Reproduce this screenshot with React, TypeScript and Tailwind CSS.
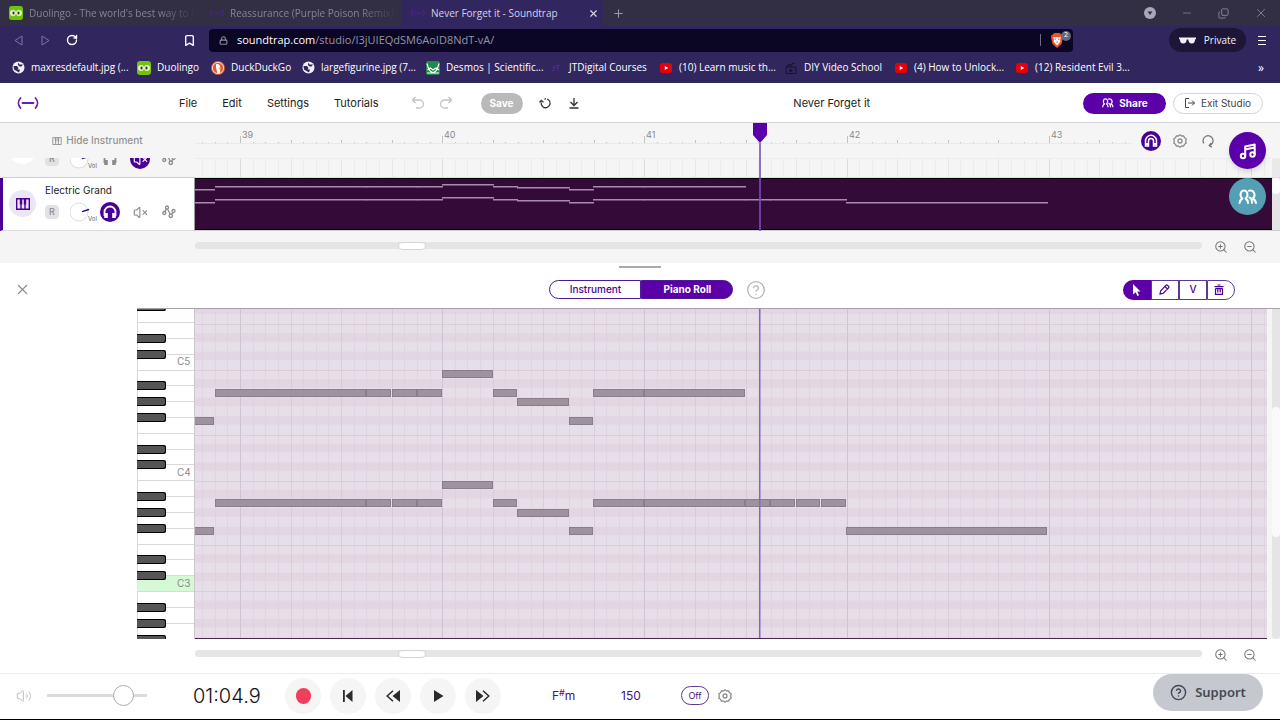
import { useState } from "react";
import type { ReactNode } from "react";
import {
  Bookmark,
  CircleHelp,
  Copy,
  Lock,
  Minus,
  Plus,
  RotateCw,
  Volume2,
  VolumeX,
  X,
  ZoomIn,
  ZoomOut,
} from "lucide-react";

function classNames(...classes: string[]) {
  return classes.filter(Boolean).join(" ");
}

// x values are pixels from the left edge of the timeline
const BAR = 202.2;
const FIRST_BAR = 45;
const PLAYHEAD = 565;
const ROW = 9.22;
const OCTAVE_TOP = 61;

// row 0 is the top B, every row is one semitone down
const NOTES = [
  { from: -4, to: 19, row: 5 },
  { from: 20, to: 171, row: 2 },
  { from: 171, to: 196, row: 2 },
  { from: 197, to: 222, row: 2 },
  { from: 222, to: 247, row: 2 },
  { from: 247, to: 298, row: 0 },
  { from: 298, to: 322, row: 2 },
  { from: 322, to: 374, row: 3 },
  { from: 374, to: 398, row: 5 },
  { from: 398, to: 449, row: 2 },
  { from: 449, to: 550, row: 2 },
  { from: -4, to: 19, row: 17 },
  { from: 20, to: 171, row: 14 },
  { from: 171, to: 196, row: 14 },
  { from: 197, to: 222, row: 14 },
  { from: 222, to: 247, row: 14 },
  { from: 247, to: 298, row: 12 },
  { from: 298, to: 322, row: 14 },
  { from: 322, to: 374, row: 15 },
  { from: 374, to: 398, row: 17 },
  { from: 398, to: 449, row: 14 },
  { from: 449, to: 550, row: 14 },
  { from: 550, to: 575, row: 14 },
  { from: 575, to: 600, row: 14 },
  { from: 601, to: 625, row: 14 },
  { from: 626, to: 651, row: 14 },
  { from: 651, to: 852, row: 17 },
];

const BOOKMARKS = [
  { label: "maxresdefault.jpg (...", icon: "globe", width: "w-[125px]" },
  { label: "Duolingo", icon: "duo", width: "w-[74px]" },
  { label: "DuckDuckGo", icon: "duck", width: "w-[91px]" },
  { label: "largefigurine.jpg (7...", icon: "globe", width: "w-[124px]" },
  { label: "Desmos | Scientific...", icon: "desmos", width: "w-[123px]" },
  { label: "JTDigital Courses", icon: "jt", width: "w-[110px]" },
  { label: "(10) Learn music th...", icon: "youtube", width: "w-[125px]" },
  { label: "DIY Video School", icon: "clapper", width: "w-[110px]" },
  { label: "(4) How to Unlock...", icon: "youtube", width: "w-[121px]" },
  { label: "(12) Resident Evil 3...", icon: "youtube", width: "w-[125px]" },
];

function Favicon({ icon }: { icon: string }) {
  if (icon === "duo")
    return (
      <svg width="14" height="14" viewBox="0 0 14 14" className="shrink-0">
        <rect width="14" height="14" rx="3" fill="#6fc40c" />
        <rect x="1" y="4" width="6" height="6" rx="3" fill="#e8f5c8" />
        <rect x="7" y="4" width="6" height="6" rx="3" fill="#e8f5c8" />
        <rect x="3.5" y="5.5" width="2" height="3" rx="1" fill="#333" />
        <rect x="8.5" y="5.5" width="2" height="3" rx="1" fill="#333" />
        <path d="M6 8.5h2L7 10.5z" fill="#f5a623" />
      </svg>
    );
  if (icon === "duck")
    return (
      <svg width="14" height="14" viewBox="0 0 14 14" className="shrink-0">
        <circle cx="7" cy="7" r="7" fill="#de5833" />
        <circle cx="7" cy="7" r="5.6" fill="none" stroke="#fff" strokeWidth=".8" />
        <path d="M5 3.2c2.500-.8 4.500.5 4.300 3.300l-.3 5.300-2.500.6L5 6.500z" fill="#fff" />
        <path d="M7.800 6.800l2.700.5-2.700 1z" fill="#f5a623" />
      </svg>
    );
  if (icon === "desmos")
    return (
      <svg width="14" height="14" viewBox="0 0 14 14" className="shrink-0">
        <rect width="14" height="14" rx="2" fill="#1e8a4c" />
        <path d="M1 2.500c2 8 4.500 9 6 9s4-1 6-9M1.500 9l3-2 2.500 2 3-2 3 2M1 12h12" fill="none" stroke="#fff" strokeWidth="1.200" />
      </svg>
    );
  if (icon === "jt")
    return (
      <svg width="14" height="14" viewBox="0 0 14 14" fill="none" stroke="#53279a" className="shrink-0">
        <path d="M5 4v5.500H3M6.500 4.500h5M9 4.500V10M3.500 6.500h6" />
      </svg>
    );
  if (icon === "youtube")
    return (
      <svg width="14" height="14" viewBox="0 0 14 14" className="shrink-0">
        <rect x="1" y="2" width="12" height="10" rx="2.500" fill="#e6000c" />
        <path d="M5.800 5v4l3.400-2z" fill="#fff" />
      </svg>
    );
  if (icon === "clapper")
    return (
      <svg width="14" height="14" viewBox="0 0 14 14" fill="none" stroke="#17122e" className="shrink-0">
        <path d="M2 6h10v6.500H2zM2 5l9-3M4 6l1-2M7 6l1-2" />
        <path d="M6 8v3l2.500-1.500z" fill="#17122e" />
      </svg>
    );
  return (
    <svg width="13" height="13" viewBox="0 0 13 13" className="shrink-0">
      <circle cx="6.500" cy="6.500" r="6" fill="#f2f0f8" />
      <path d="M1.500 5l3.500 0 1.500 2-1 1.500H8L7 11.500 4.500 10 2 8.500zM6 1.500l1.500 2h3.500l-1.500 2h-2L6 4z" fill="#32265e" />
    </svg>
  );
}

function SoundtrapMark({ className }: { className: string }) {
  return (
    <svg viewBox="0 0 22 14" fill="none" stroke="currentColor" strokeWidth="1.800" strokeLinecap="round" className={className}>
      <path d="M3.500 2C.8 5 .8 9 3.500 12M18.500 2c2.700 3 2.700 7 0 10M5.500 7h11" />
    </svg>
  );
}

function PeopleIcon({ className }: { className: string }) {
  return (
    <svg viewBox="0 0 20 16" fill="none" stroke="currentColor" strokeWidth="2" strokeLinecap="round" strokeLinejoin="round" className={className}>
      <path d="M4.500 9.500C1 7 2.500 1.500 6 1.500S11 7 7.500 9.500M4.500 9.500c-2 .5-2.500 2-3 4.500M7.500 9.500c1.500.8 2.300 2 2.500 4.500" />
      <path d="M11 1.800c5-1.300 7.500 5 3.500 7.700 2 .8 3 2 3.500 4.500M11.500 8.500c2 .8 2.500 2.500 2.500 5.500" />
    </svg>
  );
}

function HeadphonesIcon({ className }: { className: string }) {
  return (
    <svg viewBox="0 0 14 14" fill="none" stroke="currentColor" className={className}>
      <path d="M1.500 11V7a5.500 5.500 0 0 1 11 0v4" strokeWidth="1.800" />
      <path d="M3 8v5M11 8v5" strokeWidth="3.600" />
    </svg>
  );
}

function MagnetIcon() {
  return (
    <svg width="14" height="14" viewBox="0 0 14 14" fill="none" stroke="#fff">
      <path d="M1.500 12V6.800a5.500 5.500 0 0 1 11 0V12h-3V7a2.500 2.500 0 0 0-5 0v5z" strokeWidth="1.500" />
      <path d="M1.500 10h3M9.500 10h3" strokeWidth="2" />
    </svg>
  );
}

function AutomationIcon() {
  return (
    <svg width="14" height="14" viewBox="0 0 14 14" fill="none" stroke="#8c8c8c" strokeWidth="1.300">
      <circle cx="2.300" cy="8" r="1.500" />
      <circle cx="5" cy="2.500" r="1.500" />
      <circle cx="8.800" cy="10.800" r="1.700" />
      <circle cx="11.500" cy="6" r="1.500" />
      <path d="M2.900 6.600l1.400-2.700M5.500 4l2.800 5.300M9.600 9.300l1.200-2" />
    </svg>
  );
}

function GearIcon() {
  return (
    <svg width="14" height="14" viewBox="0 0 14 14" fill="none" stroke="#8c8c8c" strokeWidth="1.300" strokeLinejoin="round">
      <path d="M5.300 2L7 .8 8.700 2l2-.1.8 1.900 1.700 1L12.700 7l.5 2.200-1.700 1-.8 1.900-2-.1L7 13.200 5.300 12l-2 .1-.8-1.900-1.700-1L1.300 7 .8 4.800l1.700-1 .8-1.900z" />
      <circle cx="7" cy="7" r="2" />
    </svg>
  );
}

function PianoIcon({ className }: { className: string }) {
  return (
    <svg viewBox="0 0 14 12" fill="none" stroke="currentColor" className={className}>
      <path d="M.700.700h12.600v10.600H.700zM5 6v5M9 6v5" strokeWidth="1.400" />
      <path d="M5 1v5.500M9 1v5.500" strokeWidth="2.400" />
    </svg>
  );
}

function Tab({ title, children, active }: { title: string; children: ReactNode; active?: boolean }) {
  return (
    <div
      className={classNames(
        "flex h-full w-[201px] shrink-0 items-center pl-[9px] text-[10px]",
        active ? "bg-[#32265e] font-medium text-[#d6d1e6]" : "text-[#85829a]"
      )}
    >
      {children}
      <span
        className={classNames(
          "ml-1.5 min-w-0 flex-1 whitespace-nowrap",
          active ? "" : "[mask-image:linear-gradient(to_right,black_75%,transparent_97%)]"
        )}
      >
        {title}
      </span>
      {active && (
        <button aria-label="Close tab" className="mr-1 text-[#d8d4e6]">
          <X size={11} strokeWidth={2.5} />
        </button>
      )}
    </div>
  );
}

function BrowserChrome() {
  return (
    <div className="bg-[#32265e] font-['Open_Sans','Noto_Sans',sans-serif]">
      <div className="flex h-[26px] items-center bg-[#322f45]">
        <Tab title="Duolingo - The world's best way to le">
          <Favicon icon="duo" />
        </Tab>
        <Tab title="Reassurance (Purple Poison Remix) (p">
          <SoundtrapMark className="h-3 w-3.5 shrink-0 text-[#4a2390]" />
        </Tab>
        <Tab title="Never Forget it - Soundtrap" active>
          <SoundtrapMark className="h-3 w-3.5 shrink-0 text-[#4d1f9c]" />
        </Tab>
        <button aria-label="New tab" className="ml-[9px] text-[#9a97aa]">
          <Plus size={13} />
        </button>
        <div className="ml-auto flex items-center gap-[25px] pr-3 text-[#8a879b]">
          <button aria-label="Search tabs">
            <svg width="12" height="12" viewBox="0 0 12 12">
              <circle cx="6" cy="6" r="6" fill="#a9a7b5" />
              <path d="M3.500 4.500h5L6 8z" fill="#322f45" />
            </svg>
          </button>
          <button aria-label="Minimize"><Minus size={12} strokeWidth={1.5} /></button>
          <button aria-label="Restore"><Copy size={11} className="-scale-x-100 rotate-180" /></button>
          <button aria-label="Close window"><X size={14} strokeWidth={1.5} /></button>
        </div>
      </div>

      <div className="flex h-7 items-center pr-3">
        <button aria-label="Back" className="ml-3.5">
          <svg width="9" height="11" viewBox="0 0 9 11" fill="none" stroke="#7c74a0"><path d="M8 1L1 5.500 8 10z" /></svg>
        </button>
        <button aria-label="Forward" className="ml-[18px]">
          <svg width="9" height="11" viewBox="0 0 9 11" fill="none" stroke="#7c74a0"><path d="M1 1l7 4.500L1 10z" /></svg>
        </button>
        <button aria-label="Reload" className="ml-4 text-white"><RotateCw size={12} strokeWidth={2.8} /></button>
        <button aria-label="Bookmark" className="ml-[105px] text-white"><Bookmark size={13} strokeWidth={2.5} /></button>
        <label className="ml-[13px] flex h-[23px] flex-1 items-center rounded bg-[#0b0624] px-2.5">
          <Lock size={9} strokeWidth={3} className="text-[#8b8899]" />
          <input
            aria-label="Address"
            className="sr-only"
            defaultValue="soundtrap.com/studio/I3jUIEQdSM6AoID8NdT-vA/"
          />
          <span className="ml-[9px] text-[11px] text-[#9694a4]">
            <span className="font-medium text-white">soundtrap.com</span>/studio/I3jUIEQdSM6AoID8NdT-vA/
          </span>
          <span className="ml-auto h-3 w-px bg-[#6b6880]" />
          <button aria-label="Brave Shields" className="relative ml-2.5">
            <svg width="12" height="15" viewBox="0 0 12 15">
              <path d="M3 0h6l1 1.500 1.500.5L12 4l-1.500 7L6 15l-4.500-4L0 4l.5-2L2 1.500z" fill="#e8552b" />
              <path d="M2 4l2.500.5L6 4l1.500.5L10 4 9 7l.5 1.500L6 12.500 2.500 8.500 3 7z" fill="#fff" />
              <path d="M3.500 6.200h1.500M7 6.200h1.500M5.200 9h1.600" stroke="#e8552b" />
            </svg>
            <span className="absolute -right-2 -top-0.5 flex h-[10px] w-[10px] items-center justify-center rounded-full bg-[#6a6878] text-[7px] text-white">2</span>
          </button>
        </label>
        <button className="ml-24 flex h-6 w-[77px] items-center justify-center gap-2 rounded-full bg-[#1e1636] text-[10px] font-medium text-[#f2f0f8]">
          <svg width="17" height="7" viewBox="0 0 17 7" fill="#f2f0f8">
            <path d="M0 .5h17v1.500l-1 .5c0 2.500-1 4-3.200 4S9.500 5 9.300 2.500H7.700C7.500 5 6.500 6.500 4.200 6.500S1 5 1 2.500L0 2z" />
          </svg>
          Private
        </button>
        <button aria-label="Menu" className="ml-3 mr-0.5 flex w-2 flex-col gap-[3px]">
          <span className="h-px w-2 bg-white" />
          <span className="h-px w-2 bg-white" />
          <span className="h-px w-2 bg-white" />
        </button>
      </div>

      <nav className="flex h-[29px] items-center pb-0.5 pl-3 pr-4 text-[10px] text-white">
        {BOOKMARKS.map((b) => (
          <a key={b.label} href="#" className={classNames("flex shrink-0 items-center gap-1.5 whitespace-nowrap", b.width)}>
            <Favicon icon={b.icon} />
            {b.label}
          </a>
        ))}
        <button aria-label="More bookmarks" className="ml-auto text-xs">»</button>
      </nav>
    </div>
  );
}

function StudioHeader() {
  return (
    <header className="flex h-10 items-center border-b border-[#d3d3d8] bg-white pr-[17px] pt-px text-[11px] text-[#222]">
      <a href="#" aria-label="Soundtrap" className="ml-[17px] text-[#6a1fa8]">
        <SoundtrapMark className="h-3.5 w-[22px]" />
      </a>
      <nav className="ml-[140px] flex gap-[25px] whitespace-nowrap">
        <button>File</button>
        <button>Edit</button>
        <button>Settings</button>
        <button>Tutorials</button>
      </nav>
      <div className="ml-8 flex items-center gap-3.5 text-[#c4c4c4]">
        <button aria-label="Undo">
          <svg width="14" height="14" viewBox="0 0 14 14" fill="none" stroke="currentColor" strokeWidth="1.300"><path d="M4.500 1L1.500 4l3 3M2 4h6.500a4 4 0 0 1 0 8H5" /></svg>
        </button>
        <button aria-label="Redo">
          <svg width="14" height="14" viewBox="0 0 14 14" fill="none" stroke="currentColor" strokeWidth="1.300"><path d="M9.500 1l3 3-3 3M12 4H5.500a4 4 0 0 0 0 8H9" /></svg>
        </button>
      </div>
      <button className="ml-7 h-[21px] w-[42px] rounded-full bg-[#b9b9b9] text-[10px] font-bold text-white">Save</button>
      <button aria-label="Revisions" className="ml-4">
        <svg width="13" height="13" viewBox="0 0 13 13" fill="none" stroke="#333" strokeWidth="1.300">
          <path d="M9.500 2.700A4.500 4.500 0 1 1 2.200 5.500" />
          <path d="M9.500 2.700A4.500 4.500 0 0 0 4.500 2.500" strokeDasharray="1.500 1.200" />
          <path d="M.5 5.500L2.300 3.500l2.200 1.700" />
        </svg>
      </button>
      <button aria-label="Download" className="ml-4">
        <svg width="12" height="12" viewBox="0 0 12 12" fill="none" stroke="#333" strokeWidth="1.300"><path d="M6 1v7.500M2.500 5L6 8.500 9.500 5M1.500 11h9" /></svg>
      </button>
      <h1 className="flex-1 pl-[1px] text-center">Never Forget it</h1>
      <button className="flex h-[21px] w-[83px] items-center justify-center gap-1 rounded-full bg-[#5b00a8] text-[10px] font-bold text-white">
        <PeopleIcon className="h-2.5 w-3.5" />
        Share
      </button>
      <button className="ml-[7px] flex h-[21px] w-[90px] items-center justify-center gap-1.5 whitespace-nowrap rounded-full border border-[#d4d4d8] text-[10px] text-[#444]">
        <svg width="10" height="10" viewBox="0 0 10 10" fill="none" stroke="currentColor"><path d="M4 .5H.5v9H4M3 5h6.500M7 2.500L9.500 5 7 7.500" /></svg>
        Exit Studio
      </button>
    </header>
  );
}

function TrackControls({ name, solo, muted }: { name?: string; solo?: boolean; muted?: boolean }) {
  return (
    <div className="flex h-[52px] shrink-0 items-start pl-[6px] pt-1.5">
      <div className={classNames("mt-1.5 flex h-[27px] w-[27px] items-center justify-center rounded-full text-[#4b0095]", muted ? "bg-white" : "bg-[#ece6f4]")}>
        <PianoIcon className="h-3 w-3.5" />
      </div>
      <div className="ml-[9px]">
        <div className="h-[18px] text-[10px] leading-3 text-[#222]">{name}</div>
        <div className="flex h-5 items-center">
          <button aria-label="Record arm" className="h-3.5 w-3.5 rounded-sm bg-[#e2e2e2] text-[9px] font-medium leading-[14px] text-[#8c8c8c]">R</button>
          <svg width="29" height="20" viewBox="0 0 29 20" className="ml-[11px]">
            <circle cx="9" cy="10" r="9" fill="#fff" stroke="#cfcfcf" strokeWidth=".7" />
            <path d="M12 9.700l7-2.200" stroke="#2b0a86" strokeWidth="1.400" />
            <text x="18" y="19" fontSize="6" fill="#666">Vol</text>
          </svg>
          <button
            aria-label="Solo"
            className={classNames("ml-px flex h-5 w-5 items-center justify-center rounded-full", solo ? "bg-[#4b0095] text-white" : "text-[#8c8c8c]")}
          >
            <HeadphonesIcon className="h-3.5 w-3.5" />
          </button>
          <button
            aria-label="Mute"
            className={classNames("ml-[10px] flex h-5 w-5 items-center justify-center rounded-full", muted ? "bg-[#4b0095] text-white" : "text-[#8c8c8c]")}
          >
            <VolumeX size={15} strokeWidth={1.8} />
          </button>
          <button aria-label="Automation" className="ml-3"><AutomationIcon /></button>
        </div>
      </div>
    </div>
  );
}

function Ruler() {
  const ticks = Array.from({ length: 77 }, (_, i) => i - 3);
  return (
    <svg className="h-full w-full text-[#8a8a8a]" fontSize="9">
      {ticks.map((t) => {
        const x = Math.round(FIRST_BAR + (t * BAR) / 16);
        const top = t % 16 === 0 ? 13 : t % 4 === 0 ? 17 : 19;
        return <rect key={t} x={x} y={top} width="1" height={20 - top} fill="#c2c2c2" />;
      })}
      <rect y="20" width="100%" height="1" fill="#eaeaea" />
      {[39, 40, 41, 42, 43].map((n, i) => (
        <text key={n} x={Math.round(FIRST_BAR + i * BAR) + 2} y="15" fill="currentColor">{n}</text>
      ))}
    </svg>
  );
}

function GridLines({ bar, sub }: { bar: string; sub: string }) {
  const lines = Array.from({ length: 176 }, (_, i) => i - 3);
  return (
    <>
      {lines.map((l) => (
        <rect
          key={l}
          x={Math.round(FIRST_BAR + (l * BAR) / 16)}
          width="1"
          height="100%"
          fill={l % 4 === 0 ? bar : sub}
          opacity={l % 16 === 0 ? 1 : 0.6}
        />
      ))}
    </>
  );
}

function ScrollRow() {
  return (
    <>
      <div role="scrollbar" aria-label="Horizontal scroll" aria-controls="root" aria-valuenow={20} className="h-[7px] flex-1 rounded-full bg-[#e5e5e5]">
        <div className="ml-[203px] h-2 w-7 rounded-full border border-[#d4d4d4] bg-white" />
      </div>
      <div className="flex w-[78px] items-center gap-[15px] pl-3 pt-[3px] text-[#777]">
        <button aria-label="Zoom in"><ZoomIn size={14} strokeWidth={1.8} /></button>
        <button aria-label="Zoom out"><ZoomOut size={14} strokeWidth={1.8} /></button>
      </div>
    </>
  );
}

function Timeline() {
  return (
    <section className="relative grid grid-cols-[195px_1fr] bg-[#f5f5f5]">
      <button className="flex h-[35px] items-center justify-center gap-1 text-[10px] font-medium text-[#929292]">
        <PianoIcon className="h-2 w-2.5" />
        Hide Instrument
      </button>
      <div className="flex h-[35px]">
        <div className="min-w-0 flex-1"><Ruler /></div>
        <div className="flex w-[148px] items-center gap-3 pl-[9px]">
          <button aria-label="Snap to grid" className="flex h-5 w-5 items-center justify-center rounded-full bg-[#4b0095]"><MagnetIcon /></button>
          <button aria-label="Timeline settings"><GearIcon /></button>
          <button aria-label="Loop" className="pl-0.5">
            <svg width="14" height="14" viewBox="0 0 14 14" fill="none" stroke="#777" strokeWidth="1.300"><path d="M2.800 9.300a5 5 0 1 1 5.700 2.200M10 9l-1.800 2.600 2.600 1.500" /></svg>
          </button>
        </div>
      </div>

      <div className="flex h-5 flex-col justify-end overflow-hidden border-b border-l-[3px] border-b-[#cfcfcf] border-l-transparent">
        <TrackControls muted />
      </div>
      <div className="flex h-5 border-b border-t border-b-[#e4d9e6] border-t-[#ededed]">
        <svg className="h-full flex-1"><GridLines bar="#dcdcdc" sub="#e6e6e6" /></svg>
        <div className="w-2 bg-[#e9e9e9]" />
      </div>

      <div className="h-[53px] border-b border-l-[3px] border-r border-b-[#dcdcdc] border-l-[#4b0095] border-r-[#999] bg-white">
        <TrackControls name="Electric Grand" solo />
      </div>
      <div className="flex h-[53px] border-b border-[#cfcfcf]">
        <div className="flex-1 border-y border-black bg-[#340a38]">
          <svg className="h-full w-full">
            {NOTES.map((n) => (
              <rect
                key={`${n.from}-${n.row}`}
                x={n.from}
                y={Math.round(5 + n.row * 1.06)}
                width={n.to - n.from + 1}
                height="1.500"
                fill="#a98bad"
              />
            ))}
          </svg>
        </div>
        <div className="w-2 bg-[#e5e5e5]"><div className="h-4 rounded-full bg-white" /></div>
      </div>

      <div className="h-8" />
      <div className="flex h-8 items-center pb-1">
        <ScrollRow />
      </div>

      {/* playhead */}
      <svg width="14" height="108" className="pointer-events-none absolute left-[753px] top-0">
        <path d="M0 0h14v12l-7 8-7-8z" fill="#5b00a8" />
        <rect x="6" y="20" width="2" height="88" fill="#7a4cc0" opacity=".8" />
      </svg>

      <div className="absolute right-3.5 top-[9px] flex flex-col gap-[9px]">
        <button aria-label="Loops" className="flex h-[37px] w-[37px] items-center justify-center rounded-full bg-[#5b00a8] shadow-md">
          <svg width="18" height="18" viewBox="0 0 18 18" fill="none" stroke="#fff" strokeWidth="2" strokeLinejoin="round">
            <circle cx="4" cy="14" r="2.200" />
            <circle cx="13.500" cy="12.500" r="2.200" />
            <path d="M6.200 14V4.500l9.500-2v10M6.200 7.500l9.500-2" />
          </svg>
        </button>
        <button aria-label="Collaborate" className="flex h-[37px] w-[37px] items-center justify-center rounded-full bg-[#559fb4] text-white">
          <PeopleIcon className="h-4 w-5" />
        </button>
      </div>
    </section>
  );
}

function PanelHeader({ view, setView }: { view: string; setView: (v: string) => void }) {
  const tool = "flex h-5 w-[28px] items-center justify-center border border-[#5a3a96] text-[#4b0095]";
  return (
    <div className="relative grid h-[45px] grid-cols-3 items-center bg-white pt-2">
      <div className="absolute inset-x-0 top-[3px] mx-auto h-0.5 w-[42px] bg-[#ababab]" />
      <button aria-label="Close panel" className="ml-3.5 w-4 text-[#8a8a8a]"><X size={17} strokeWidth={1.5} /></button>
      <div className="flex items-center justify-center pl-9 text-[10px] font-medium">
        {["Instrument", "Piano Roll"].map((v, i) => (
          <button
            key={v}
            onClick={() => setView(v)}
            className={classNames(
              "h-[19px] w-[92px] shrink-0 border border-[#4b1a96]",
              i === 0 ? "rounded-l-full" : "rounded-r-full",
              view === v ? "bg-[#5b00a8] font-bold text-white" : "text-[#4b0095]"
            )}
          >
            {v}
          </button>
        ))}
        <button aria-label="Help" className="ml-[13px] h-5 w-5 text-[#b5b5b5]"><CircleHelp size={20} strokeWidth={1.6} /></button>
      </div>
      <div className="mr-[45px] flex justify-end">
        <button aria-label="Select" className="flex h-5 w-7 items-center justify-center rounded-l-full bg-[#5b00a8]">
          <svg width="9" height="12" viewBox="0 0 9 12" fill="#fff"><path d="M1 0l7.500 7.500H5.300l1.700 3.800-1.600.7-1.700-3.800L1 10.500z" /></svg>
        </button>
        <button aria-label="Draw" className={tool}>
          <svg width="11" height="11" viewBox="0 0 11 11" fill="none" stroke="currentColor" strokeWidth="1.200"><path d="M1 10l.6-3L7 1.200a1 1 0 0 1 1.400 0l1.200 1.200a1 1 0 0 1 0 1.400L4 9.400zM6 2.500L8.500 5" /></svg>
        </button>
        <button className={classNames(tool, "text-[10px] font-medium")}>V</button>
        <button aria-label="Delete" className={classNames(tool, "rounded-r-full pr-1")}>
          <svg width="10" height="11" viewBox="0 0 10 11" fill="none" stroke="currentColor" strokeWidth="1.200"><path d="M.5 2.700h9M3.500 1h3M1.500 4.500v5.800h7V4.500M1.500 4.700h7M3.800 4.500v4M6.200 4.500v4" /></svg>
        </button>
      </div>
    </div>
  );
}

function Keyboard() {
  // white key edges, counted from the bottom of C5
  const edges = Array.from({ length: 22 }, (_, i) => i - 4);
  return (
    <svg width="58" height="330" className="shrink-0" fontSize="10">
      <rect width="58" height="330" fill="#fff" />
      <rect width="1" height="330" fill="#d9d9d9" />
      <rect x="0" y="267" width="58" height="16" fill="#d4f9d4" />
      {edges.map((e) => (
        <rect key={e} y={Math.round(60.500 + e * 15.830)} width="58" height="1" fill="#d9d9d9" />
      ))}
      {edges
        .filter((e) => ![0, 4].includes((e + 7) % 7))
        .map((e) => (
          <g key={e}>
            <rect x="-4" y={Math.round(60.500 + e * 15.830) - 4} width="33" height="9" rx="2" fill="#000" />
            <rect x="-4" y={Math.round(60.500 + e * 15.830) - 3} width="32" height="7" rx="2" fill="#555" />
          </g>
        ))}
      {["C5", "C4", "C3"].map((c, i) => (
        <text key={c} x="40" y={Math.round(56 + i * 111)} fill="#8a8a8a">{c}</text>
      ))}
      <rect x="57" width="1" height="330" fill="#c8c8c8" />
    </svg>
  );
}

function PianoRoll() {
  const rows = Array.from({ length: 38 }, (_, i) => i - 7);
  return (
    <div className="bg-white pl-[137px]">
      <div className="flex h-[331px] border-t border-[#a9a0ab]">
        <Keyboard />
        <svg className="h-full min-w-0 flex-1 border-b border-[#4a2a4a] bg-[#e7dfe8]">
          {rows
            .filter((r) => [1, 3, 5, 8, 10].includes((r + 12) % 12))
            .map((r) => (
              <rect key={r} y={OCTAVE_TOP + r * ROW} width="100%" height="8.500" fill="#e1d6e2" />
            ))}
          {rows
            .filter((r) => [0, 7].includes((r + 12) % 12))
            .map((r) => (
              <rect key={r} y={Math.round(OCTAVE_TOP + r * ROW)} width="100%" height="1" fill="#d9cfda" />
            ))}
          <GridLines bar="#cfc4d1" sub="#dacfdc" />
          {NOTES.map((n) => (
            <rect
              key={`${n.from}-${n.row}`}
              x={n.from + 0.5}
              y={Math.round(OCTAVE_TOP + n.row * ROW + 0.4) + 0.5}
              width={n.to - n.from - 1}
              height="7"
              fill="#9f929f"
              stroke="#8a7c8a"
            />
          ))}
          <rect x={PLAYHEAD - 1} width="1.500" height="100%" fill="#8264cc" />
        </svg>
        <div className="flex w-[13px] shrink-0 justify-end bg-[#f5f5f5]">
          <div className="h-full w-2 rounded-b bg-[#e5e5e5] pt-[98px]"><div className="h-[130px] w-2 rounded-full bg-[#fafafa]" /></div>
        </div>
      </div>
    </div>
  );
}

function Transport() {
  const round = "flex h-9 w-9 items-center justify-center rounded-full bg-[#f5f5f5] text-[#2b2b2b]";
  return (
    <footer className="mt-auto flex h-[47px] items-center border-b border-t border-b-black border-t-[#ececec] bg-white pb-0.5 pl-4 pr-[17px] text-xs text-[#3d1480]">
      <Volume2 size={16} strokeWidth={1.3} className="text-[#b5b5b5]" />
      <input
        type="range"
        aria-label="Master volume"
        defaultValue={83}
        className="ml-[15px] h-[21px] w-[100px] appearance-none bg-transparent [&::-webkit-slider-runnable-track]:h-[3px] [&::-webkit-slider-runnable-track]:bg-[#dcdcdc] [&::-webkit-slider-thumb]:mt-[-9px] [&::-webkit-slider-thumb]:h-[21px] [&::-webkit-slider-thumb]:w-[21px] [&::-webkit-slider-thumb]:appearance-none [&::-webkit-slider-thumb]:rounded-full [&::-webkit-slider-thumb]:border [&::-webkit-slider-thumb]:border-[#aaa] [&::-webkit-slider-thumb]:bg-white"
      />
      <div className="ml-[46px] w-[92px] text-xl font-light text-[#111]">01:04.9</div>
      <div className="flex gap-[9px]">
        <button aria-label="Record" className={round}><span className="h-4 w-[15px] rounded-full bg-[#ee3f5c]" /></button>
        <button aria-label="Go to start" className={round}>
          <svg width="10" height="12" viewBox="0 0 10 12" fill="currentColor"><path d="M0 0h1.800v12H0zM9.500 0v12L2.500 6z" /></svg>
        </button>
        <button aria-label="Rewind" className={round}>
          <svg width="14" height="12" viewBox="0 0 14 12" fill="currentColor"><path d="M14 0v12L6.500 6z" /><path d="M7 .7L1.200 6 7 11.300" fill="none" stroke="currentColor" strokeWidth="1.500" /></svg>
        </button>
        <button aria-label="Play" className={round}>
          <svg width="11" height="12" viewBox="0 0 11 12" fill="currentColor"><path d="M1 0l9.500 6L1 12z" /></svg>
        </button>
        <button aria-label="Fast forward" className={round}>
          <svg width="14" height="12" viewBox="0 0 14 12" fill="currentColor"><path d="M0 0v12l7.500-6z" /><path d="M7 .7L12.800 6 7 11.300" fill="none" stroke="currentColor" strokeWidth="1.500" /></svg>
        </button>
      </div>
      <button aria-label="Key" className="ml-[51px] w-[69px] text-left">F<span className="relative -top-1 text-[9px]">#</span>m</button>
      <button aria-label="Tempo" className="w-[60px] text-left">150</button>
      <button aria-label="Metronome" className="h-[19px] w-7 rounded-full border border-[#5a3a96] text-[9px]">Off</button>
      <button aria-label="Metronome settings" className="ml-[9px]"><GearIcon /></button>
      <button className="ml-auto flex h-[37px] w-[110px] items-center justify-center gap-2 self-start rounded-full bg-[#c5c8cf] font-['Noto_Sans',sans-serif] text-[13px] font-semibold text-[#444950]">
        <CircleHelp size={17} />
        Support
      </button>
    </footer>
  );
}

export default function App() {
  const [view, setView] = useState("Piano Roll");

  return (
    <div className="flex min-h-screen flex-col overflow-hidden bg-white font-['Inter',sans-serif]">
      <BrowserChrome />
      <StudioHeader />
      <Timeline />
      <PanelHeader view={view} setView={setView} />
      <PianoRoll />
      <div className="flex h-[34px] items-center pb-1.5 pl-[195px]">
        <ScrollRow />
      </div>
      <Transport />
    </div>
  );
}
